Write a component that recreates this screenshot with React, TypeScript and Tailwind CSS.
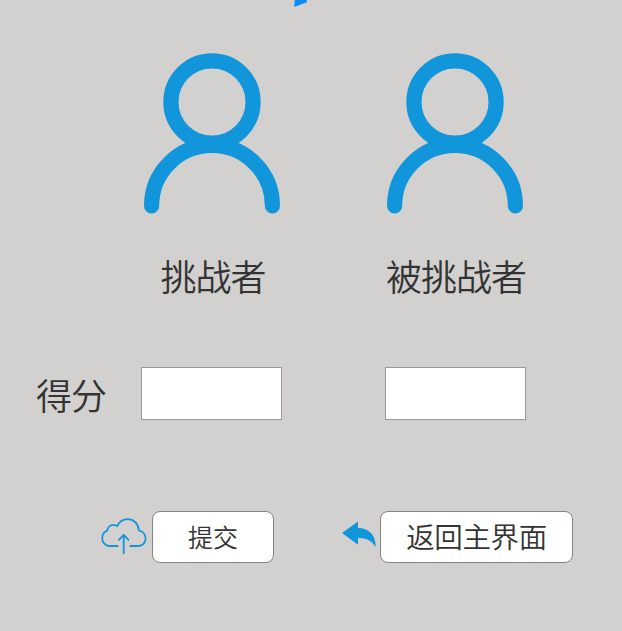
function Person() {
  return (
    <svg className="block h-[164px] w-[140px]" viewBox="0 0 140 164" fill="none" stroke="#1296db" strokeWidth="15.2">
      <circle cx="70" cy="52" r="41.1" />
      <path d="M9.6 155.8a60.4 60.4 0 0 1 120.8 0" strokeLinecap="round" />
    </svg>
  );
}

function CloudUpload() {
  return (
    <svg className="block h-[40px] w-[48px]" viewBox="0 0 48 40" fill="none" stroke="#1296db" strokeWidth="1.8" strokeLinecap="round" strokeLinejoin="round">
      <path d="M17.6 30H9.5C5.2 30 2.2 26.5 2.2 22.2c0-3.4 2-6.3 5.1-7.5.4-3.5 3-5.9 6.3-5.9 1.3 0 2.7.5 3.7 1.4C19.2 5.7 23 3.1 27.6 3.1c6.3 0 11 4.7 11.2 11.2 4.1.9 6.8 4.3 6.8 8.2 0 4.4-3.2 7.5-7.2 7.5h-8" />
      <path d="M23.7 37.3V19.1M18.9 23.8l4.8-4.9 4.8 4.9" />
    </svg>
  );
}

function BackArrow() {
  return (
    <svg className="block h-[28px] w-[36px]" viewBox="0 0 36 28" fill="#1296db">
      <path d="M1 13L17 1.5V8C27 8 35.5 15 34.5 27.2C31 20.5 25 17.8 17 18.1V24.7Z" />
    </svg>
  );
}

export default function App() {
  return (
    <main className="h-[631px] w-[622px] overflow-hidden bg-[#d2d1cf] font-['Noto_Sans_CJK_SC',sans-serif] font-[350] text-[#333]">
      <header className="h-[50px] pl-[292px]">
        <svg className="block h-[10px] w-[20px]" viewBox="0 0 20 10">
          <path d="M2.8 0H14.8V2.3L2.2 7Z" fill="#0a8cf5" />
        </svg>
      </header>
      <section className="flex gap-[103.4px] pl-[142px]">
        <Person />
        <Person />
      </section>
      <section className="flex h-[128px] pt-[36px] text-[36px] leading-[50px] tracking-[-1px]">
        <div className="ml-[142px] w-[142px] text-center">挑战者</div>
        <div className="ml-[101px] w-[142px] text-center">被挑战者</div>
      </section>
      <section className="flex h-[143px] pl-[36px] pt-[25px]">
        <label className="mt-[2px] w-[105.4px] text-[36px] leading-[50px] tracking-[-1px]">得分</label>
        <input aria-label="挑战者得分" className="h-[53px] w-[141px] border border-[#999] bg-white outline-none" />
        <input aria-label="被挑战者得分" className="ml-[102.6px] h-[53px] w-[141px] border border-[#999] bg-white outline-none" />
      </section>
      <section className="flex items-start pl-[100px] pt-[26px]">
        <div className="mt-[5px] w-[52px]">
          <CloudUpload />
        </div>
        <button className="h-[52px] w-[122px] rounded-[8px] border border-[#848484] bg-white pb-[2px] text-[25px] leading-[48px]">提交</button>
        <div className="ml-[67px] mt-[9px] w-[39px]">
          <BackArrow />
        </div>
        <button className="h-[52px] w-[193px] rounded-[8px] border border-[#848484] bg-white pb-[3px] text-[28.5px] leading-[47px] tracking-[-0.4px]">返回主界面</button>
      </section>
    </main>
  );
}
